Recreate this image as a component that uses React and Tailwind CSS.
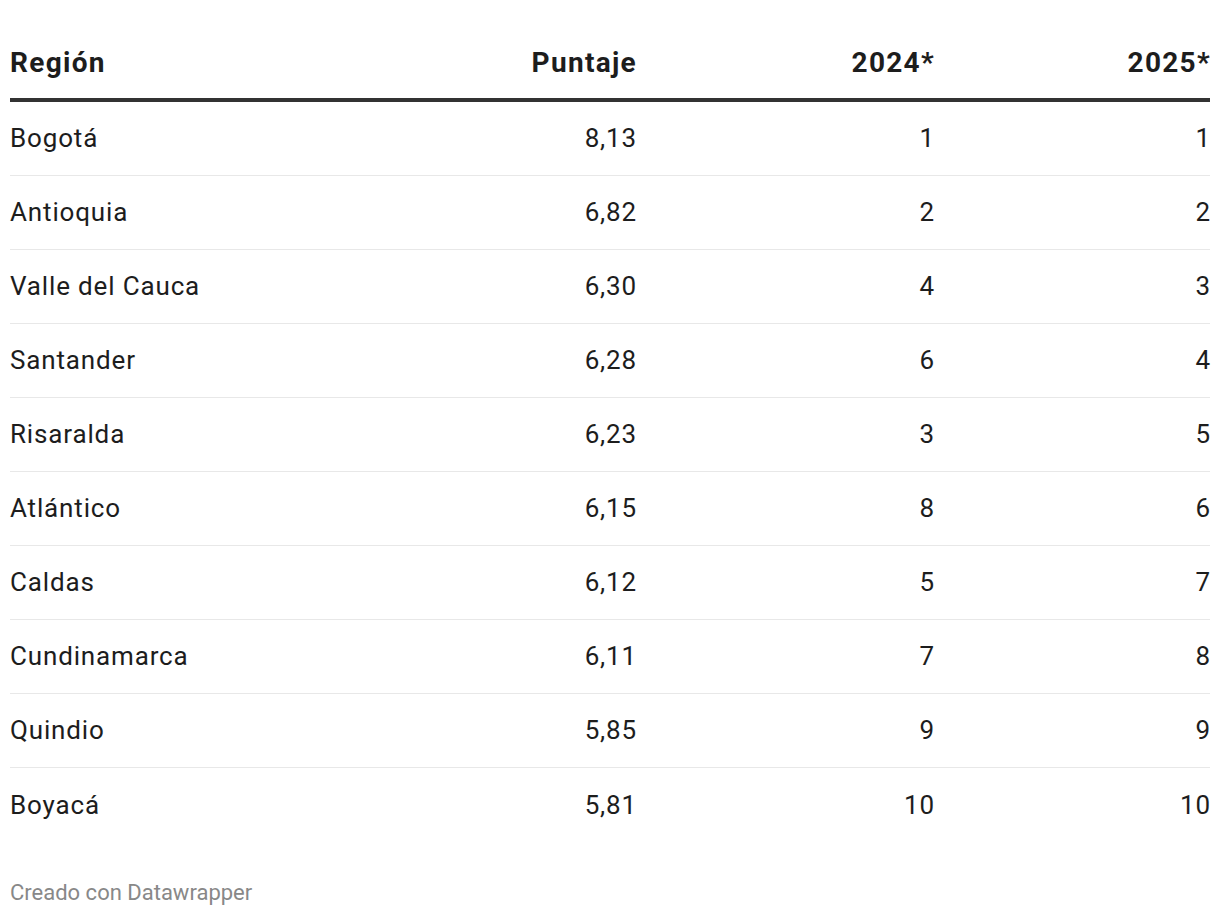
const rows = [
  ["Bogotá", "8,13", "1", "1"],
  ["Antioquia", "6,82", "2", "2"],
  ["Valle del Cauca", "6,30", "4", "3"],
  ["Santander", "6,28", "6", "4"],
  ["Risaralda", "6,23", "3", "5"],
  ["Atlántico", "6,15", "8", "6"],
  ["Caldas", "6,12", "5", "7"],
  ["Cundinamarca", "6,11", "7", "8"],
  ["Quindio", "5,85", "9", "9"],
  ["Boyacá", "5,81", "10", "10"],
];

const cols = "grid grid-cols-[326px_300px_298px_276px]";

export default function App() {
  return (
    <div
      className="min-h-[916px] bg-white px-[10px] pt-[28px] text-[#1d1d1d]"
      style={{ fontFamily: "Roboto, 'Liberation Sans', sans-serif" }}
    >
      {/* header */}
      <div className={`${cols} h-[74px] items-center border-b-4 border-[#333] text-[28px] font-bold tracking-[1.3px]`}>
        <div>Región</div>
        <div className="-mr-[1px] text-right">Puntaje</div>
        <div className="-mr-[1px] text-right">2024*</div>
        <div className="-mr-[1px] text-right">2025*</div>
      </div>
      {/* body */}
      <div>
        {rows.map((r, i) => (
          <div
            key={r[0]}
            className={`${cols} h-[74px] items-center text-[26px] tracking-[0.85px] ${
              i < rows.length - 1 ? "border-b border-[#e8e8e8]" : ""
            }`}
          >
            <div>{r[0]}</div>
            <div className="-mr-[1px] text-right">{r[1]}</div>
            <div className="-mr-[1px] text-right">{r[2]}</div>
            <div className="-mr-[1px] text-right">{r[3]}</div>
          </div>
        ))}
      </div>
      {/* footer */}
      <div className="mt-[34px] text-[22px] text-[#888]">Creado con Datawrapper</div>
    </div>
  );
}
